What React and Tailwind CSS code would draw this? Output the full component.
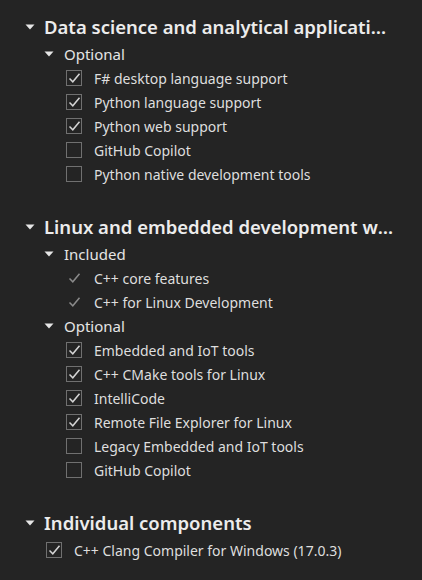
const sections = [
  {
    title: "Data science and analytical applications",
    groups: [
      {
        name: "Optional",
        items: [
          { label: "F# desktop language support", checked: true },
          { label: "Python language support", checked: true },
          { label: "Python web support", checked: true },
          { label: "GitHub Copilot", checked: false },
          { label: "Python native development tools", checked: false },
        ],
      },
    ],
  },
  {
    title: "Linux and embedded development with C++",
    groups: [
      {
        name: "Included",
        included: true,
        items: [{ label: "C++ core features" }, { label: "C++ for Linux Development" }],
      },
      {
        name: "Optional",
        items: [
          { label: "Embedded and IoT tools", checked: true },
          { label: "C++ CMake tools for Linux", checked: true },
          { label: "IntelliCode", checked: true },
          { label: "Remote File Explorer for Linux", checked: true },
          { label: "Legacy Embedded and IoT tools", checked: false },
          { label: "GitHub Copilot", checked: false },
        ],
      },
    ],
  },
];

const Caret = () => (
  <svg width="10" height="6" viewBox="0 0 10 6" className="shrink-0">
    <path d="M0.5 0.5 L9.5 0.5 L5 5.5 Z" fill="#e6e6e6" />
  </svg>
);

const Tick = ({ color }) => (
  <svg width="13" height="12" viewBox="0 0 13 12">
    <path d="M1.5 6.5 L4.8 9.8 L11.5 1.8" fill="none" stroke={color} strokeWidth="1.5" />
  </svg>
);

const Checkbox = ({ checked }) => (
  <div className="w-4 h-4 border border-[#707070] flex items-center justify-center shrink-0">
    {checked && <Tick color="#d4d4d4" />}
  </div>
);

const Item = ({ label, checked, included }) => (
  <div className="h-6 flex items-center pl-[66px]">
    {included ? (
      <div className="w-4 h-4 flex items-center justify-center shrink-0">
        <Tick color="#8a8a8a" />
      </div>
    ) : (
      <Checkbox checked={checked} />
    )}
    <span className="ml-3 text-[14px] text-[#dedede]">{label}</span>
  </div>
);

const Heading = ({ children }) => (
  <div className="h-[30px] flex items-center pl-[25px] pr-[28px]">
    <Caret />
    <span className="ml-[9px] text-[18.5px] font-semibold text-[#ececec] truncate">
      {children}
    </span>
  </div>
);

export default function App() {
  return (
    <div
      className="w-[422px] h-[580px] bg-[#242424] pt-3 overflow-hidden"
      style={{ fontFamily: '"Noto Sans", "Open Sans", sans-serif' }}
    >
      <div className="flex flex-col gap-[26px]">
        {sections.map((s) => (
          <div key={s.title}>
            <Heading>{s.title}</Heading>
            {s.groups.map((g) => (
              <div key={g.name}>
                <div className="h-6 flex items-center pl-[44px]">
                  <Caret />
                  <span className="ml-[10px] text-[15px] text-[#e4e4e4]">{g.name}</span>
                </div>
                {g.items.map((it) => (
                  <Item key={it.label} {...it} included={g.included} />
                ))}
              </div>
            ))}
          </div>
        ))}
        <div>
          <Heading>Individual components</Heading>
          <div className="h-6 flex items-center pl-[46px]">
            <Checkbox checked />
            <span className="ml-3 text-[14px] text-[#dedede]">
              C++ Clang Compiler for Windows (17.0.3)
            </span>
          </div>
        </div>
      </div>
    </div>
  );
}
